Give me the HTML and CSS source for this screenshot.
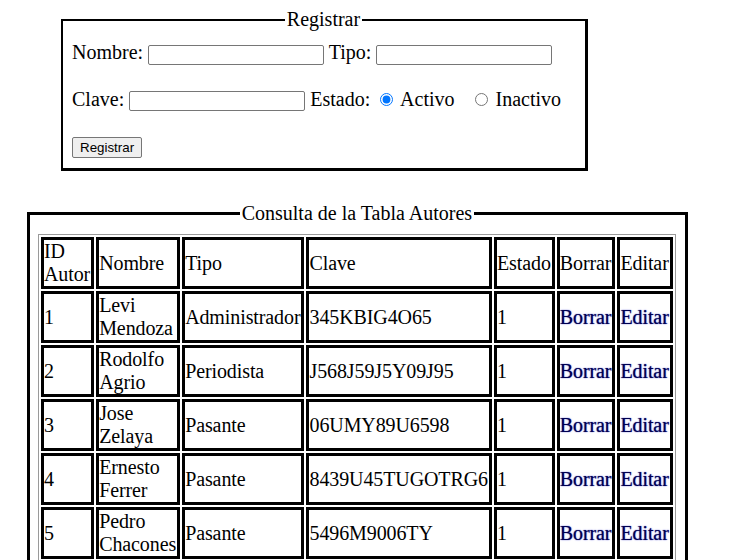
FILE: index.html
```html
<!DOCTYPE html>
<html lang="es">
<head>
<meta charset="utf-8">
<title>Autores</title>
<link rel="stylesheet" href="styles.css">
</head>
<body>
<form class="registro">
  <fieldset class="box box-registro">
    <legend class="box-title">Registrar</legend>
    <div class="form-row">Nombre: <input type="text" class="field"> Tipo: <input type="text" class="field"></div>
    <div class="form-row">Clave: <input type="text" class="field"> Estado: <label class="opt"><input type="radio" name="estado" checked> Activo</label> <label class="opt"><input type="radio" name="estado"> Inactivo</label></div>
    <div class="form-row"><button type="button" class="btn">Registrar</button></div>
  </fieldset>
</form>
<fieldset class="box box-consulta">
  <legend class="box-title">Consulta de la Tabla Autores</legend>
  <table class="grid">
    <tr><td>ID Autor</td><td>Nombre</td><td>Tipo</td><td>Clave</td><td>Estado</td><td>Borrar</td><td>Editar</td></tr>
    <tr><td>1</td><td>Levi Mendoza</td><td>Administrador</td><td>345KBIG4O65</td><td>1</td><td><a class="act" href="#">Borrar</a></td><td><a class="act" href="#">Editar</a></td></tr>
    <tr><td>2</td><td>Rodolfo Agrio</td><td>Periodista</td><td>J568J59J5Y09J95</td><td>1</td><td><a class="act" href="#">Borrar</a></td><td><a class="act" href="#">Editar</a></td></tr>
    <tr><td>3</td><td>Jose Zelaya</td><td>Pasante</td><td>06UMY89U6598</td><td>1</td><td><a class="act" href="#">Borrar</a></td><td><a class="act" href="#">Editar</a></td></tr>
    <tr><td>4</td><td>Ernesto Ferrer</td><td>Pasante</td><td>8439U45TUGOTRG6</td><td>1</td><td><a class="act" href="#">Borrar</a></td><td><a class="act" href="#">Editar</a></td></tr>
    <tr><td>5</td><td>Pedro Chacones</td><td>Pasante</td><td>5496M9006TY</td><td>1</td><td><a class="act" href="#">Borrar</a></td><td><a class="act" href="#">Editar</a></td></tr>
  </table>
</fieldset>
</body>
</html>
```

FILE: styles.css
```css
html, body {
  margin: 0;
  padding: 0;
  background: #fff;
}

body {
  padding-top: 8px;
  font-family: "Liberation Serif", "Times New Roman", serif;
  font-size: 20px;
  line-height: 23px;
  color: #000;
}

.registro {
  margin: 0;
}

.box {
  margin: 0;
  border: 3px solid #000;
}

.box-title {
  margin: 0 auto;
  padding: 0 2px;
}

.box-registro {
  box-sizing: border-box;
  width: 527px;
  margin-left: 61px;
  border-width: 2px 3px 3px 2px;
  padding: 10px 10px 10px 9px;
}

.form-row + .form-row {
  margin-top: 23px;
}

.field {
  box-sizing: border-box;
  width: 176px;
  height: 20px;
  margin: 0;
  padding: 1px 2px;
  border: 1px solid #767676;
  border-radius: 2px;
  font: 13.33px "Liberation Sans", Arial, sans-serif;
  background: #fff;
}

.opt + .opt {
  margin-left: 10px;
}

.btn {
  box-sizing: border-box;
  height: 21px;
  margin: 0;
  padding: 1px 7px;
  border: 1px solid #767676;
  border-radius: 2px;
  background: #efefef;
  color: #000;
  font: 13.33px "Liberation Sans", Arial, sans-serif;
}

.box-consulta {
  width: fit-content;
  margin-top: 31px;
  margin-left: 27px;
  padding: 9px 9px 9px 8px;
}

.grid {
  width: 1px;
  border: 1px solid #9a9a9a;
  border-spacing: 2px;
}

.grid td {
  border: 3px solid #000;
  padding: 0 1px 0 0;
  letter-spacing: -0.1px;
  text-align: left;
  vertical-align: middle;
}

.act {
  color: #000050;
  text-decoration: none;
  text-shadow: 0 0 1px rgba(0, 0, 140, 0.7), 0 0 2px rgba(90, 90, 255, 0.35);
}
```
